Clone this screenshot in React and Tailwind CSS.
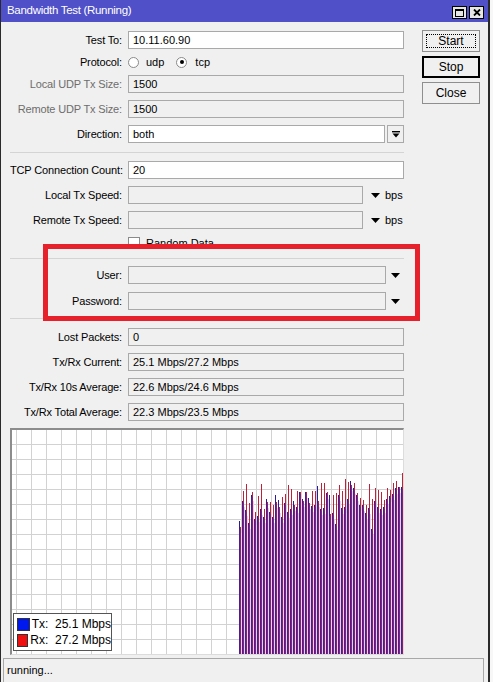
import React from 'react';

// tops of the bars (screen y), one pair per sample
const TX_TOPS = [520, 500, 509, 522, 494, 518, 515, 508, 516, 498, 511, 516, 494, 499, 516, 502, 511, 508, 500, 506, 491, 498, 491, 497, 505, 504, 485, 508, 507, 492, 494, 512, 523, 494, 507, 506, 498, 480, 487, 494, 504, 504, 512, 507, 528, 500, 506, 508, 506, 498, 495, 493, 487, 486, 486];
const RX_TOPS = [526, 490, 483, 502, 491, 511, 495, 483, 508, 501, 501, 504, 501, 506, 496, 493, 484, 488, 504, 490, 491, 500, 491, 502, 490, 490, 500, 482, 482, 491, 513, 494, 492, 484, 490, 478, 481, 484, 482, 492, 497, 499, 504, 483, 498, 487, 489, 491, 499, 487, 489, 482, 480, 486, 472];

const FONT = { fontFamily: '"Liberation Sans", Arial, sans-serif' };

function DownTri() {
  return (
    <svg width="9" height="5" viewBox="0 0 9 5" className="block">
      <polygon points="0,0 9,0 4.5,5" fill="#000" />
    </svg>
  );
}

function Label({ children, dim }) {
  return (
    <div className={`w-[112px] shrink-0 text-right whitespace-nowrap tracking-[-0.15px] ${dim ? 'text-[#6d6d6d]' : 'text-black'}`}>
      {children}
    </div>
  );
}

function Box({ value, white, w = 'w-[276px]' }) {
  return (
    <div
      className={`${w} h-[18px] border border-[#a9a9a9] px-[4px] leading-[16px] whitespace-nowrap ${
        white ? 'bg-white' : 'bg-[#f0f0f0]'
      }`}
    >
      {value}
    </div>
  );
}

function Row({ label, dim, children }) {
  return (
    <div className="flex items-center h-[18px]">
      <Label dim={dim}>{label}</Label>
      <div className="ml-[6px] flex items-center">{children}</div>
    </div>
  );
}

function Sep() {
  return <div className="h-px bg-[#d4d4d4]" />;
}

function Radio({ checked }) {
  return (
    <span className="w-[11px] h-[11px] rounded-full border border-[#8a8a8a] bg-white flex items-center justify-center">
      {checked && <span className="w-[4px] h-[4px] rounded-full bg-black" />}
    </span>
  );
}

function Graph() {
  const vLines = [];
  for (let x = 16; x <= 403; x += 15) vLines.push(x);
  const hLines = [];
  for (let y = 443; y <= 652; y += 15) hLines.push(y);
  return (
    <div className="relative w-[394px] h-[227px] border-t-2 border-l-2 border-t-[#8c8c8c] border-l-[#8c8c8c] border-r border-b border-r-[#dcdcdc] border-b-[#dcdcdc] bg-white">
      <svg width="391" height="224" viewBox="12 429 391 224" className="block">
        {vLines.map((x) => (
          <rect key={'v' + x} x={x} y={429} width={1} height={224} fill="#d2d2d2" />
        ))}
        {hLines.map((y) => (
          <rect key={'h' + y} x={12} y={y} width={391} height={1} fill="#d2d2d2" />
        ))}
        {TX_TOPS.map((t, i) => {
          const x = 239 + i * 3;
          const r = RX_TOPS[i];
          const m = Math.max(t, r);
          return (
            <g key={i}>
              <rect x={x + 2} y={m + 6} width={1} height={653 - m - 6} fill="#e6d2ea" />
              <rect x={x} y={t} width={1} height={653 - t} fill="#2c1c9c" />
              <rect x={x} y={m + 2} width={1} height={653 - m - 2} fill="#4a1e92" />
              <rect x={x + 1} y={r} width={1} height={653 - r} fill="#c0203a" />
              <rect x={x + 1} y={m + 2} width={1} height={653 - m - 2} fill="#8a2070" />
            </g>
          );
        })}
      </svg>
      <div className="absolute left-[1px] top-[183px] w-[99px] h-[38px] bg-white border border-[#555] flex flex-col justify-center gap-[3px] pl-[3px] text-[12px] leading-[13px]">
        <div className="flex items-center gap-[2px]">
          <span className="w-[14px] h-[13px] bg-[#0018f0] border border-[#333]" />
          <span className="whitespace-pre">Tx:  25.1 Mbps</span>
        </div>
        <div className="flex items-center gap-[2px]">
          <span className="w-[14px] h-[13px] bg-[#f01010] border border-[#333]" />
          <span className="whitespace-pre">Rx:  27.2 Mbps</span>
        </div>
      </div>
    </div>
  );
}

function Btn({ children, focus, def }) {
  return (
    <div
      className={`relative w-[58px] h-[22px] flex items-center justify-center bg-[#f0f0f0] text-[12px] ${
        def ? 'border-2 border-black' : 'border border-[#8f8f8f]'
      }`}
    >
      {focus && <span className="absolute inset-[3px] border border-dotted border-black" />}
      <span className="relative">{children}</span>
    </div>
  );
}

export default function App() {
  return (
    <div className="w-[493px] h-[682px] bg-[#f7f7f7] overflow-hidden text-[11px] text-black" style={FONT}>
      <div className="w-[490px] h-[682px] bg-[#f0f0f0] border-l border-r-2 border-l-[#2a2a2a] border-r-[#2a2a2a] flex flex-col">
        {/* Title bar */}
        <div className="h-[22px] bg-[#5050c8] flex items-center pl-[6px] pr-[4px] shrink-0">
          <span className="text-white text-[11.5px] tracking-[-0.3px]">Bandwidth Test (Running)</span>
          <div className="ml-auto flex gap-[2px] mt-[3px]">
            <span className="w-[15px] h-[13px] bg-[#e6e6e6] border border-black flex items-center justify-center">
              <span className="w-[9px] h-[8px] border border-black border-t-2" />
            </span>
            <span className="w-[15px] h-[13px] bg-[#e6e6e6] border border-black flex items-center justify-center">
              <svg width="8" height="7" viewBox="0 0 8 7">
                <path d="M1 0.5 L7 6.5 M7 0.5 L1 6.5" stroke="#000" strokeWidth="1.8" />
              </svg>
            </span>
          </div>
        </div>

        {/* Body */}
        <div className="relative flex pl-[9px] pt-[9px]">
          <div className="w-[394px] flex flex-col">
            <Row label="Test To:">
              <Box value="10.11.60.90" white />
            </Row>
            <div className="flex items-center h-[12px] mt-[7px]">
              <Label>Protocol:</Label>
              <div className="ml-[6px] flex items-center">
                <Radio />
                <span className="ml-[7px]">udp</span>
                <span className="ml-[12px]">
                  <Radio checked />
                </span>
                <span className="ml-[8px]">tcp</span>
              </div>
            </div>
            <div className="mt-[7px] flex flex-col gap-[7px]">
              <Row label="Local UDP Tx Size:" dim>
                <Box value="1500" />
              </Row>
              <Row label="Remote UDP Tx Size:" dim>
                <Box value="1500" />
              </Row>
              <Row label="Direction:">
                <Box value="both" white w="w-[257px]" />
                <div className="ml-[2px] w-[17px] h-[18px] border border-[#a9a9a9] bg-[#f0f0f0] flex items-center justify-center">
                  <svg width="8" height="7" viewBox="0 0 8 7">
                    <rect x="0" y="0" width="8" height="1.4" fill="#000" />
                    <polygon points="0.5,2.5 7.5,2.5 4,6.5" fill="#000" />
                  </svg>
                </div>
              </Row>
            </div>

            <div className="mt-[9px]">
              <Sep />
            </div>

            <div className="mt-[8px] flex flex-col gap-[7px]">
              <Row label="TCP Connection Count:">
                <Box value="20" white />
              </Row>
              <Row label="Local Tx Speed:">
                <Box w="w-[235px]" />
                <span className="ml-[8px]">
                  <DownTri />
                </span>
                <span className="ml-[5px]">bps</span>
              </Row>
              <Row label="Remote Tx Speed:">
                <Box w="w-[235px]" />
                <span className="ml-[8px]">
                  <DownTri />
                </span>
                <span className="ml-[5px]">bps</span>
              </Row>
            </div>

            <div className="mt-[8px] flex items-center h-[12px] pl-[118px]">
              <span className="w-[12px] h-[12px] border border-[#8a8a8a] bg-white" />
              <span className="ml-[6px]">Random Data</span>
            </div>

            <div className="mt-[9px]">
              <Sep />
            </div>

            <div className="mt-[7px] flex flex-col gap-[8px]">
              <Row label="User:">
                <Box w="w-[258px]" />
                <span className="ml-[5px]">
                  <DownTri />
                </span>
              </Row>
              <Row label="Password:">
                <Box w="w-[258px]" />
                <span className="ml-[5px]">
                  <DownTri />
                </span>
              </Row>
            </div>

            <div className="mt-[8px]">
              <Sep />
            </div>

            <div className="mt-[9px] flex flex-col gap-[7px]">
              <Row label="Lost Packets:">
                <Box value="0" />
              </Row>
              <Row label="Tx/Rx Current:">
                <Box value="25.1 Mbps/27.2 Mbps" />
              </Row>
              <Row label="Tx/Rx 10s Average:">
                <Box value="22.6 Mbps/24.6 Mbps" />
              </Row>
              <Row label="Tx/Rx Total Average:">
                <Box value="22.3 Mbps/23.5 Mbps" />
              </Row>
            </div>

            <div className="mt-[7px]">
              <Graph />
            </div>
          </div>

          <div className="ml-[18px] -mt-[1px] flex flex-col gap-[4px]">
            <Btn focus>Start</Btn>
            <Btn def>Stop</Btn>
            <Btn>Close</Btn>
          </div>

          {/* highlight box drawn over the auth fields */}
          <div className="absolute left-[42px] top-[222px] w-[377px] h-[77px] border-[5px] border-[#e6212b] pointer-events-none" />
        </div>

        {/* Status bar */}
        <div className="mt-[3px] ml-[2px] w-[481px] flex-1 border-t border-l border-r border-[#a8a8a8] bg-[#f0f0f0] flex items-center pl-[3px]">
          running...
        </div>
      </div>
    </div>
  );
}
